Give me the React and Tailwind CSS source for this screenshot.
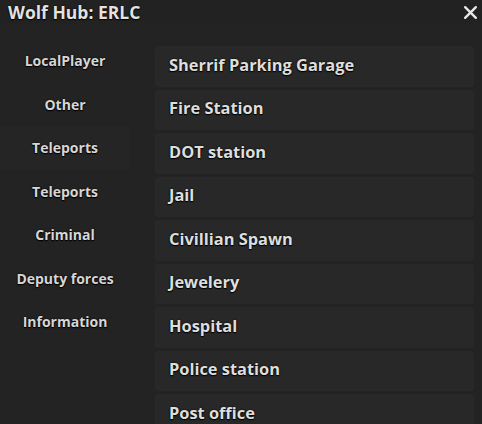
import React from "react";

const tabs = ["LocalPlayer", "Other", "Teleports", "Teleports", "Criminal", "Deputy forces", "Information"];
const places = [
  "Sherrif Parking Garage",
  "Fire Station",
  "DOT station",
  "Jail",
  "Civillian Spawn",
  "Jewelery",
  "Hospital",
  "Police station",
  "Post office",
];

export default function App() {
  return (
    <div
      className="w-[482px] h-[424px] overflow-hidden bg-[#232323] flex flex-col text-[#e6e6e6]"
      style={{ fontFamily: '"Open Sans", "Noto Sans", sans-serif' }}
    >
      <div className="h-[24px] flex items-center justify-between pl-[8px] pr-[4px] shrink-0 bg-[#222222]">
        <span className="text-[17.5px] font-bold text-[#e2e2e2] [text-shadow:0_0_2px_#000,0_1px_1px_#000]">Wolf Hub: ERLC</span>
        <svg width="15" height="15" viewBox="0 0 14 14">
          <path d="M2 2 L12 12 M12 2 L2 12" stroke="#e8e8e8" strokeWidth="2.2" strokeLinecap="round" />
        </svg>
      </div>
      <div className="flex flex-1 min-h-0 pt-[15px]">
        <div className="w-[130px] shrink-0 flex flex-col bg-[#232323]">
          {tabs.map((t, i) => (
            <div
              key={i}
              className={`h-[43.5px] flex items-center justify-center text-[14px] font-bold text-[#d6d6d6] [text-shadow:0_0_2px_#000,0_1px_1px_#000] ${i === 2 ? "bg-[#252525]" : ""}`}
            >
              {t}
            </div>
          ))}
        </div>
        <div className="flex-1 pl-[25px] pr-[8px] flex flex-col gap-[3px] pt-[7px]">
          {places.map((p, i) => (
            <div
              key={i}
              className="h-[40.5px] shrink-0 flex items-center pl-[14px] pb-[2px] bg-[#282828] rounded-[3px] text-[16.4px] font-bold text-[#dedede] [text-shadow:0_0_2px_#000,0_1px_1px_#000]"
            >
              {p}
            </div>
          ))}
        </div>
      </div>
    </div>
  );
}
